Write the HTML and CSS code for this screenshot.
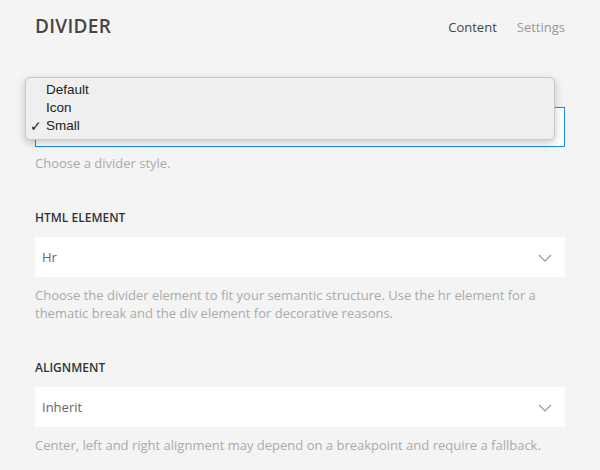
FILE: index.html
```html
<!DOCTYPE html>
<html lang="en">
<head>
    <meta charset="UTF-8">
    <title>Divider - Content</title>
    <link rel="stylesheet" href="styles.css">
</head>
<body>
    <div class="panel">
        <header class="panel-header">
            <h1 class="panel-title">Divider</h1>
            <nav class="tabs">
                <a class="tab active">Content</a>
                <a class="tab">Settings</a>
            </nav>
        </header>

        <div class="field field-first">
            <div class="select-wrap">
                <div class="select focused"></div>
                <ul class="popup">
                    <li>Default</li>
                    <li>Icon</li>
                    <li class="checked">Small</li>
                </ul>
            </div>
            <p class="help">Choose a divider style.</p>
        </div>

        <div class="field">
            <label class="field-label">HTML Element</label>
            <div class="select">
                <span>Hr</span>
                <svg class="chevron" width="14" height="8" viewBox="0 0 14 8"><polyline points="1,1 7,7 13,1" fill="none" stroke="#999" stroke-width="1.2"/></svg>
            </div>
            <p class="help">Choose the divider element to fit your semantic structure. Use the hr element for a thematic break and the div element for decorative reasons.</p>
        </div>

        <div class="field">
            <label class="field-label">Alignment</label>
            <div class="select">
                <span>Inherit</span>
                <svg class="chevron" width="14" height="8" viewBox="0 0 14 8"><polyline points="1,1 7,7 13,1" fill="none" stroke="#999" stroke-width="1.2"/></svg>
            </div>
            <p class="help">Center, left and right alignment may depend on a breakpoint and require a fallback.</p>
        </div>
    </div>
</body>
</html>
```

FILE: styles.css
```css
* {
    margin: 0;
    padding: 0;
    box-sizing: border-box;
}

body {
    background-color: #f4f4f4;
    font-family: 'Open Sans', sans-serif;
    color: #444;
}

.panel {
    padding: 0 35px;
}

.panel-header {
    display: flex;
    justify-content: space-between;
    align-items: center;
    height: 54px;
}

.panel-title {
    font-size: 19px;
    font-weight: 600;
    letter-spacing: 0.3px;
    text-transform: uppercase;
    color: #464646;
    padding-bottom: 2px;
}

.tabs {
    display: flex;
    gap: 20px;
    font-size: 13px;
}

.tab {
    color: #999;
}

.tab.active {
    color: #444;
}

.field {
    margin-bottom: 38px;
}

.field:last-child {
    margin-bottom: 0;
}

.field-first {
    padding-top: 53px;
}

.field-first .help {
    margin-top: 7px;
}

.field-label {
    display: block;
    font-size: 12px;
    font-weight: 600;
    text-transform: uppercase;
    color: #333;
    height: 27px;
    line-height: 16px;
}

.select-wrap {
    position: relative;
}

.select {
    display: flex;
    justify-content: space-between;
    align-items: center;
    height: 40px;
    padding: 0 13px 0 7px;
    background: #fff;
    font-size: 13px;
    color: #666;
}

.select.focused {
    border: 1px solid #1e87f0;
}

.chevron {
    margin-top: 1px;
}

.help {
    margin-top: 9px;
    font-size: 13px;
    line-height: 18px;
    color: #aaa;
}

.popup {
    position: absolute;
    left: -10px;
    top: -30px;
    width: 530px;
    list-style: none;
    padding: 3px 0 4px;
    background: #efefef;
    border: 1px solid #c9c9c9;
    border-radius: 5px;
    box-shadow: 0 3px 8px rgba(0, 0, 0, 0.22);
    font-family: 'Liberation Sans', Arial, sans-serif;
    font-size: 13.5px;
    color: #222;
}

.popup li {
    position: relative;
    height: 18px;
    line-height: 18px;
    padding-left: 20px;
}

.popup li.checked::before {
    content: "\2713";
    position: absolute;
    left: 4px;
    font-family: 'DejaVu Sans', sans-serif;
    font-size: 14px;
    font-weight: bold;
}
```
